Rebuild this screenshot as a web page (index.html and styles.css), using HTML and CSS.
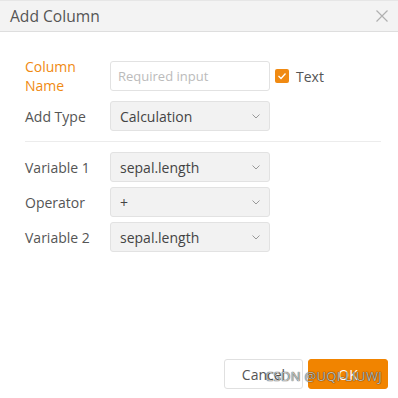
FILE: index.html
```html
<!DOCTYPE html>
<html>
<head>
<meta charset="utf-8">
<link rel="stylesheet" href="styles.css">
</head>
<body>
<div class="dialog">
  <div class="header">
    <span class="title">Add Column</span>
    <svg class="close" width="12" height="12" viewBox="0 0 12 12"><path d="M0.5 0.5L11.5 11.5M11.5 0.5L0.5 11.5" stroke="#b0b0b0" stroke-width="1.2" fill="none"/></svg>
  </div>
  <div class="body">
    <div class="row row-tall">
      <label class="label required">Column Name</label>
      <div class="input placeholder">Required input</div>
      <span class="check"><svg width="10" height="8" viewBox="0 0 10 8"><path d="M1.5 4L4 6.5L8.5 1.5" stroke="#fff" stroke-width="1.3" fill="none"/></svg></span>
      <span class="check-label">Text</span>
    </div>
    <div class="row">
      <label class="label">Add Type</label>
      <div class="select"><span>Calculation</span><svg class="chev" width="8" height="5" viewBox="0 0 8 5"><path d="M0.5 0.5L4 4L7.5 0.5" stroke="#999" fill="none"/></svg></div>
    </div>
    <div class="divider"></div>
    <div class="row">
      <label class="label">Variable 1</label>
      <div class="select"><span>sepal.length</span><svg class="chev" width="8" height="5" viewBox="0 0 8 5"><path d="M0.5 0.5L4 4L7.5 0.5" stroke="#999" fill="none"/></svg></div>
    </div>
    <div class="row">
      <label class="label">Operator</label>
      <div class="select"><span>+</span><svg class="chev" width="8" height="5" viewBox="0 0 8 5"><path d="M0.5 0.5L4 4L7.5 0.5" stroke="#999" fill="none"/></svg></div>
    </div>
    <div class="row">
      <label class="label">Variable 2</label>
      <div class="select"><span>sepal.length</span><svg class="chev" width="8" height="5" viewBox="0 0 8 5"><path d="M0.5 0.5L4 4L7.5 0.5" stroke="#999" fill="none"/></svg></div>
    </div>
  </div>
  <div class="footer">
    <button class="btn btn-cancel">Cancel</button>
    <button class="btn btn-ok">OK</button>
    <span class="watermark">CSDN @UQI-LIUWJ</span>
  </div>
</div>
</body>
</html>
```

FILE: styles.css
```css
html, body {
  margin: 0;
  padding: 0;
  background: #fff;
}
body {
  font-family: "Open Sans", "Noto Sans", "Liberation Sans", sans-serif;
  color: #555;
}
.dialog {
  width: 398px;
  height: 398px;
  display: flex;
  flex-direction: column;
  position: relative;
}
.header {
  height: 30px;
  background: #f3f3f3;
  border-top: 1px solid #e6e6e6;
  border-bottom: 1px solid #dedede;
  display: flex;
  align-items: center;
  justify-content: space-between;
  padding: 0 10px;
  box-sizing: content-box;
}
.title {
  font-size: 15.6px;
  color: #555;
}
.body {
  flex: 1;
  padding: 24px 20px 0 25px;
}
.row {
  display: flex;
  align-items: center;
  height: 30px;
  margin-bottom: 5px;
}
.row-tall {
  height: 40px;
}
.label {
  width: 85px;
  font-size: 14px;
  line-height: 19px;
  color: #555;
}
.required {
  color: #f08a12;
  width: 70px;
  margin-right: 15px;
}
.input, .select {
  width: 160px;
  height: 30px;
  box-sizing: border-box;
  border: 1px solid #e2e2e2;
  border-radius: 3px;
  display: flex;
  align-items: center;
  padding: 0 9px;
  font-size: 14px;
}
.placeholder {
  color: #bbb;
  font-size: 13px;
  padding-left: 7px;
}
.select {
  background: #f2f2f2;
  color: #444;
  justify-content: space-between;
}
.check {
  width: 14px;
  height: 14px;
  background: #f08a12;
  border-radius: 2px;
  margin-left: 5px;
  display: flex;
  align-items: center;
  justify-content: center;
}
.check-label {
  margin-left: 7px;
  font-size: 14px;
  color: #555;
}
.divider {
  height: 1px;
  background: #ececec;
  margin: 10px -3px 10px 0;
}
.footer {
  display: flex;
  justify-content: flex-end;
  gap: 5px;
  padding: 0 10px 9px 0;
  position: relative;
}
.btn {
  height: 30px;
  border-radius: 3px;
  font-family: inherit;
  font-size: 14px;
  padding: 0;
  box-sizing: border-box;
}
.btn-cancel {
  width: 79px;
  background: #fff;
  border: 1px solid #e0e0e0;
  color: #555;
}
.btn-ok {
  width: 80px;
  background: #f18400;
  border: 1px solid #f18400;
  color: #fff;
}
.watermark {
  position: absolute;
  right: 16px;
  bottom: 13px;
  font-size: 13px;
  color: rgba(235, 235, 235, 0.8);
  text-shadow: 0 0 1px rgba(0, 0, 0, 0.8), 0 0 1px rgba(0, 0, 0, 0.6);
  letter-spacing: 0.3px;
}
```
